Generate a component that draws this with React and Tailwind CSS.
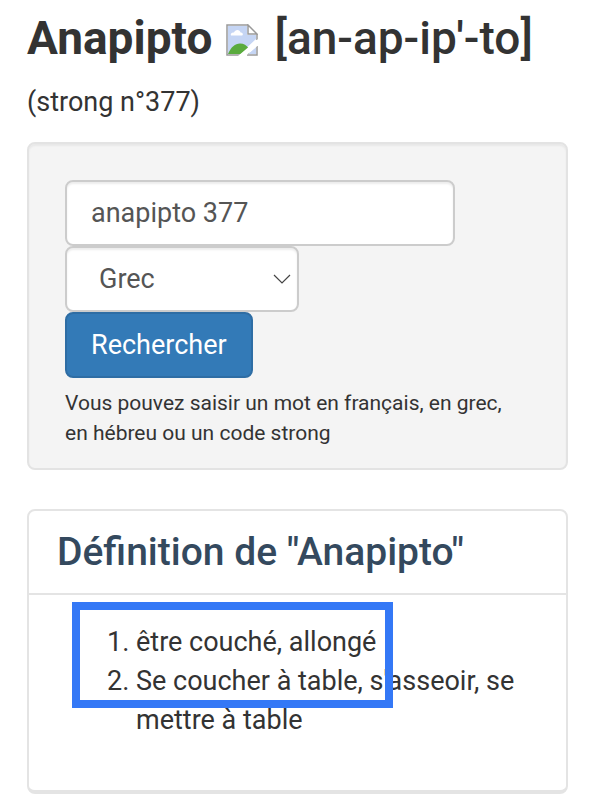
function BrokenImage() {
  return (
    <svg
      role="img"
      aria-label="Image"
      viewBox="0 0 32 32"
      className="mt-1 mr-4 ml-[14px] size-8 shrink-0"
    >
      <path d="M1 1H22L31 10V31H1Z" fill="#fff" />
      <path d="M2 2H21V11H30V15L14 30H2Z" fill="#c5d5f4" />
      <path d="M2 30C5 23 9 19.500 14 19.500C18 19.500 20.500 21.500 22.500 24L15 30Z" fill="#5aab3d" />
      <path d="M24 30C23.500 28.500 23 27.500 22.500 27L19 30Z" fill="#5aab3d" />
      <path d="M5 11.500C4 9.500 6 8 8 8.500C9 5 14 5 14.500 8.500C17 8.500 17.500 11 16 11.500Z" fill="#fff" />
      <path d="M22 30L30 23V30Z" fill="#c5d5f4" />
      <path d="M31 10V16M31 22V31H21M14 31H1V1H22" fill="none" stroke="#999" strokeWidth="1.500" />
      <path d="M22 1V10H31Z" fill="#fff" stroke="#999" strokeWidth="1.500" />
      <path d="M12 32L32 15V21.500L19.500 32Z" fill="#fff" />
    </svg>
  );
}

function Heading() {
  return (
    <header>
      <h1 className="flex items-center text-[46px] leading-[50px] font-medium whitespace-nowrap">
        <strong className="font-bold">Anapipto</strong>
        <BrokenImage />
        <span>[an-ap-ip&apos;-to]</span>
      </h1>
      <p className="mt-5 leading-[39px]">(strong n°377)</p>
    </header>
  );
}

const control =
  "h-[66px] rounded-lg border-2 border-[#ccc] bg-white text-[#555] shadow-[inset_0_2px_2px_rgba(0,0,0,0.075)]";

function SearchForm() {
  return (
    <form
      onSubmit={(e) => e.preventDefault()}
      className="mt-5 flex flex-col items-start rounded-lg border-2 border-[#e3e3e3] bg-[#f4f4f4] px-9 pt-9 pb-5 shadow-[inset_0_2px_2px_rgba(0,0,0,0.05)]"
    >
      <input
        type="text"
        aria-label="Mot ou code strong"
        defaultValue="anapipto 377"
        className={`${control} w-full max-w-[390px] px-6`}
      />
      <div className="relative w-[234px]">
        <select aria-label="Langue" className={`${control} w-full appearance-none px-8`}>
          <option>Grec</option>
        </select>
        <svg
          aria-hidden="true"
          viewBox="0 0 18 10"
          className="pointer-events-none absolute top-7 right-2 h-[10px] w-[18px]"
        >
          <path d="M1 1L9 9L17 1" fill="none" stroke="#444" strokeWidth="1.200" />
        </svg>
      </div>
      <button
        type="submit"
        className="h-[66px] rounded-lg border-2 border-[#2e6da4] bg-[#337ab7] px-6 text-white"
      >
        Rechercher
      </button>
      <p className="mt-[10px] pr-3 text-[21px] leading-[30px]">
        Vous pouvez saisir un mot en français, en grec, en hébreu ou un code strong
      </p>
    </form>
  );
}

function Definition() {
  return (
    <section className="mt-[39px] rounded-lg border-2 border-b-4 border-[#e4e4e4]">
      <h2 className="border-b-2 border-[#e4e4e4] px-7 py-4 text-[39px] leading-[50px] font-medium text-[#34495e]">
        Définition de &quot;Anapipto&quot;
      </h2>
      <div className="relative px-7 pt-7 pb-[50px]">
        <ol className="list-decimal pl-[79px] leading-[39px]">
          <li>être couché, allongé</li>
          <li>Se coucher à table, s&apos;asseoir, se mettre à table</li>
        </ol>
        <div className="pointer-events-none absolute top-[7px] left-[43px] h-[106px] w-[321px] border-8 border-[#3478f6]" />
      </div>
    </section>
  );
}

export default function App() {
  return (
    <main className="bg-white pt-[13px] pr-[25px] pb-[7px] pl-[27px] font-[Roboto,sans-serif] text-[27px] text-[#333]">
      <Heading />
      <SearchForm />
      <Definition />
    </main>
  );
}
